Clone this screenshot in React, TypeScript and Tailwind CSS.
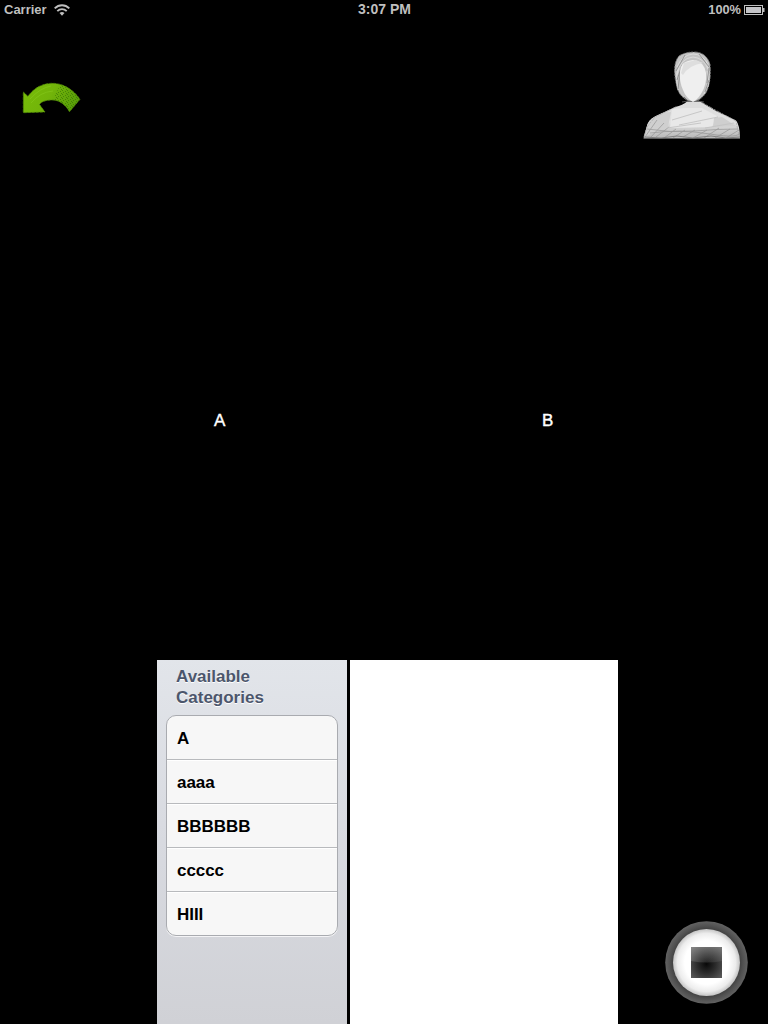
import React from "react";

const categories = ["A", "aaaa", "BBBBBB", "ccccc", "HIII"];

function StatusBar() {
  return (
    <header className="grid h-5 shrink-0 grid-cols-3 items-center pl-1 pr-[3px] text-[13px] leading-5 font-bold text-[#bfbfbf]">
      <div className="flex items-center gap-[7px]">
        <span>Carrier</span>
        <svg width="16" height="12" viewBox="0 0 16 12" fill="none" stroke="#bfbfbf" strokeWidth="1.9">
          <path d="M.7 4.4C4.9 .2 11.1 .2 15.3 4.4" />
          <path d="M3.3 7.1C6 4.5 10 4.5 12.7 7.1" />
          <path d="M5.5 9.1Q8 7 10.5 9.1L8 11.7Z" fill="#bfbfbf" stroke="none" />
        </svg>
      </div>
      <span className="pb-[2px] text-center text-[14px] leading-[18px]">3:07 PM</span>
      <div className="flex items-center justify-end gap-[3px]">
        <span className="text-[12.8px]">100%</span>
        <svg className="mb-px" width="21" height="10" viewBox="0 0 21 10">
          <rect x=".5" y=".5" width="18" height="9" fill="none" stroke="#bfbfbf" />
          <rect x="2" y="2" width="15" height="6" fill="#c5c5c8" />
          <path d="M19 3h1.5v4H19" fill="#bfbfbf" />
        </svg>
      </div>
    </header>
  );
}

function BackArrow() {
  return (
    <svg width="59" height="32" viewBox="0 0 59 32">
      <defs>
        <linearGradient id="leaf" x1="0" y1="0" x2="1" y2=".3">
          <stop offset="0" stopColor="#78bd08" />
          <stop offset=".55" stopColor="#72b40a" />
          <stop offset="1" stopColor="#5a9f08" />
        </linearGradient>
        <pattern id="grain" width="5" height="4" patternUnits="userSpaceOnUse">
          <path d="M0 .5h1M3 1.5h1M1 2.5h1M4 3.5h1" stroke="#2d6503" strokeWidth="1" opacity=".55" />
        </pattern>
      </defs>
      <path d="M1.3 10L5.8 14.3Q16 1 31 1.3Q47 2 58 17.3L47.5 29.8Q41 18.5 31 18Q20 18 17.5 22.5L23 30L1.3 30.7Z" fill="url(#leaf)" stroke="#4f8908" strokeWidth=".8" strokeDasharray="3 1" />
      <path d="M38 3Q49 6 57.5 17.3L48 29Q41 19 31 18Z" fill="url(#grain)" />
      <path d="M8 17Q18 6 29 4M9 21Q18 10 31 9" fill="none" stroke="#86c91c" strokeWidth=".6" />
    </svg>
  );
}

function Avatar() {
  return (
    <svg width="100" height="90" viewBox="0 0 100 90">
      <defs>
        <linearGradient id="bust" x1="0" y1="0" x2="0" y2="1">
          <stop offset="0" stopColor="#dcdcdc" />
          <stop offset=".55" stopColor="#e0e0e0" />
          <stop offset="1" stopColor="#b8b8b8" />
        </linearGradient>
        <clipPath id="bodyClip">
          <path d="M1.5 87.5L4.7 76Q6 69 13 65.5L33 56Q41 54 45 50.5H58L74 60Q83 64 94 69.5Q98 74 98 87.5Z" />
        </clipPath>
      </defs>
      <path d="M1.5 87.5L4.7 76Q6 69 13 65.5L33 56Q41 54 45 50.5H58L74 60Q83 64 94 69.5Q98 74 98 87.5Z" fill="url(#bust)" />
      <g clipPath="url(#bodyClip)" fill="none">
        <path d="M30 58L45 57H60L75 65L70 76L28 77Z" fill="#e8e8e8" />
        <path d="M0 63L29 61L26 76L0 87ZM72 67L80 66L94 75L71 76Z" fill="#cfcfcf" />
        <g stroke="#8b8b8b" strokeWidth=".8" opacity=".75">
          <path d="M3 86L15 69M8 87L22 72M14 86L27 76M22 87L34 78M31 87L43 79M41 86L53 79M51 87L65 79M62 87L77 77M73 87L88 78M84 87L97 79" />
          <path d="M5 78Q28 82 52 80T96 78M8 82Q38 78 68 83T98 81" />
        </g>
        <path d="M30 69L60 60M37 74L76 66M25 77L59 72M63 77L92 72" stroke="#c3c3c3" strokeWidth=".9" />
        <path d="M2 86L19 87L35 85L51 87L69 85L84 87L98 86" stroke="#828282" />
      </g>
      <path d="M2 86L5 76L13 66L34 56M59 51L75 60L94 70L97 85" fill="none" stroke="#adadad" strokeWidth=".8" strokeDasharray="5 1 2 1" />
      <path d="M37 5Q43 1 52 1Q64 1 68 13Q69 27 66.5 35Q65 43 58 48L54 50H47Q38 46 35.5 38Q29 14 37 5Z" fill="#c3c3c3" stroke="#7b7b7b" strokeWidth=".9" strokeDasharray="4 1 2 1" />
      <g fill="none" strokeWidth=".8">
        <path d="M35 16Q40 4 51 3Q61 3 66 14M35 24Q38 7 51 6Q62 7 66 18M36 39Q32 22 39 10M66 36Q69 23 64 10M62 43Q68 31 65 20" stroke="#dfdfdf" />
        <path d="M34 20L43 4M35 29L40 14M36 38L38 22M57 3L67 16M63 41L67 29M65 32L67 17" stroke="#858585" />
      </g>
      <path d="M38 21Q38 10 51 9Q62 10 64 22Q65 34 59 43Q55 49 51 51Q44 47 41 39Q37 30 38 21Z" fill="#efefef" />
      <path d="M39 22L42 12L54 9L61 12Q47 14 41 24Z" fill="#dedede" />
      <path d="M42 46L46 50L40 51M60 46L56 50L62 51" stroke="#666" strokeWidth=".8" fill="none" />
    </svg>
  );
}

function StopButton() {
  return (
    <button aria-label="Stop" className="size-[83px]">
      <svg width="83" height="83" viewBox="0 0 83 83">
        <defs>
          <radialGradient id="rim" cx=".5" cy=".5" r=".5">
            <stop offset=".78" stopColor="#3d3d3d" />
            <stop offset=".88" stopColor="#505050" />
            <stop offset="1" stopColor="#626262" />
          </radialGradient>
          <radialGradient id="face" cx=".5" cy=".5" r=".5">
            <stop offset=".65" stopColor="#fff" />
            <stop offset=".87" stopColor="#ececec" />
            <stop offset="1" stopColor="#c4c4c4" />
          </radialGradient>
          <radialGradient id="stop" cx=".5" cy=".55" r=".7">
            <stop offset="0" stopColor="#080808" />
            <stop offset=".45" stopColor="#2e2e2e" />
            <stop offset="1" stopColor="#606060" />
          </radialGradient>
          <linearGradient id="gloss" x1="0" y1="0" x2="1" y2="1">
            <stop offset="0" stopColor="#fff" stopOpacity=".24" />
            <stop offset="1" stopColor="#fff" stopOpacity=".06" />
          </linearGradient>
        </defs>
        <circle cx="41.5" cy="41.5" r="41.3" fill="url(#rim)" />
        <circle cx="41.5" cy="41.5" r="33.5" fill="url(#face)" />
        <path d="M26 26H57V57H26Z" fill="url(#stop)" />
        <path d="M26 26H57V40Q42 43 26 40Z" fill="url(#gloss)" />
      </svg>
    </button>
  );
}

function CategoryPanel() {
  return (
    <aside className="w-[190px] bg-linear-to-b from-[#e2e5ea] via-[#d8dae0] to-[#d0d1d6] px-[9px] pt-[6px]">
      <h2 className="h-[49px] pl-[10px] text-[17px] leading-[21px] font-bold text-[#4c566c] [text-shadow:0_1px_0_white]">
        Available<br />Categories
      </h2>
      <ul className="h-[221px] overflow-hidden rounded-[10px] border border-[#a9abb0] bg-[#f7f7f7] shadow-[0_1px_0_#f4f4f6]">
        {categories.map((name) => (
          <li key={name} className="flex h-11 items-center border-b border-[#b8babd] pt-[2px] pl-[10px] text-[17px] leading-5 font-bold tracking-[-0.05px] text-black shadow-[0_1px_0_white] last:border-b-0">
            {name}
          </li>
        ))}
      </ul>
    </aside>
  );
}

export default function App() {
  return (
    <main className="flex h-[1024px] w-[768px] flex-col overflow-hidden bg-black font-['Liberation_Sans',Arial,sans-serif]">
      <StatusBar />
      <div className="flex h-[391px] shrink-0 items-start justify-between pl-[22px] pr-[26px]">
        <button aria-label="Back" className="mt-[62px]"><BackArrow /></button>
        <div className="mt-[31px]"><Avatar /></div>
      </div>
      <div className="flex h-[249px] shrink-0 text-[17px] leading-5 text-white">
        <span className="w-[328px] pl-[214px] [-webkit-text-stroke:0.4px_white]">A</span>
        <span className="pl-[214px] [-webkit-text-stroke:0.4px_white]">B</span>
      </div>
      <div className="flex h-[364px] shrink-0 pl-[157px]">
        <CategoryPanel />
        <section className="ml-[3px] w-[268px] bg-white" />
        <div className="ml-[47px] flex items-end pb-5"><StopButton /></div>
      </div>
    </main>
  );
}
